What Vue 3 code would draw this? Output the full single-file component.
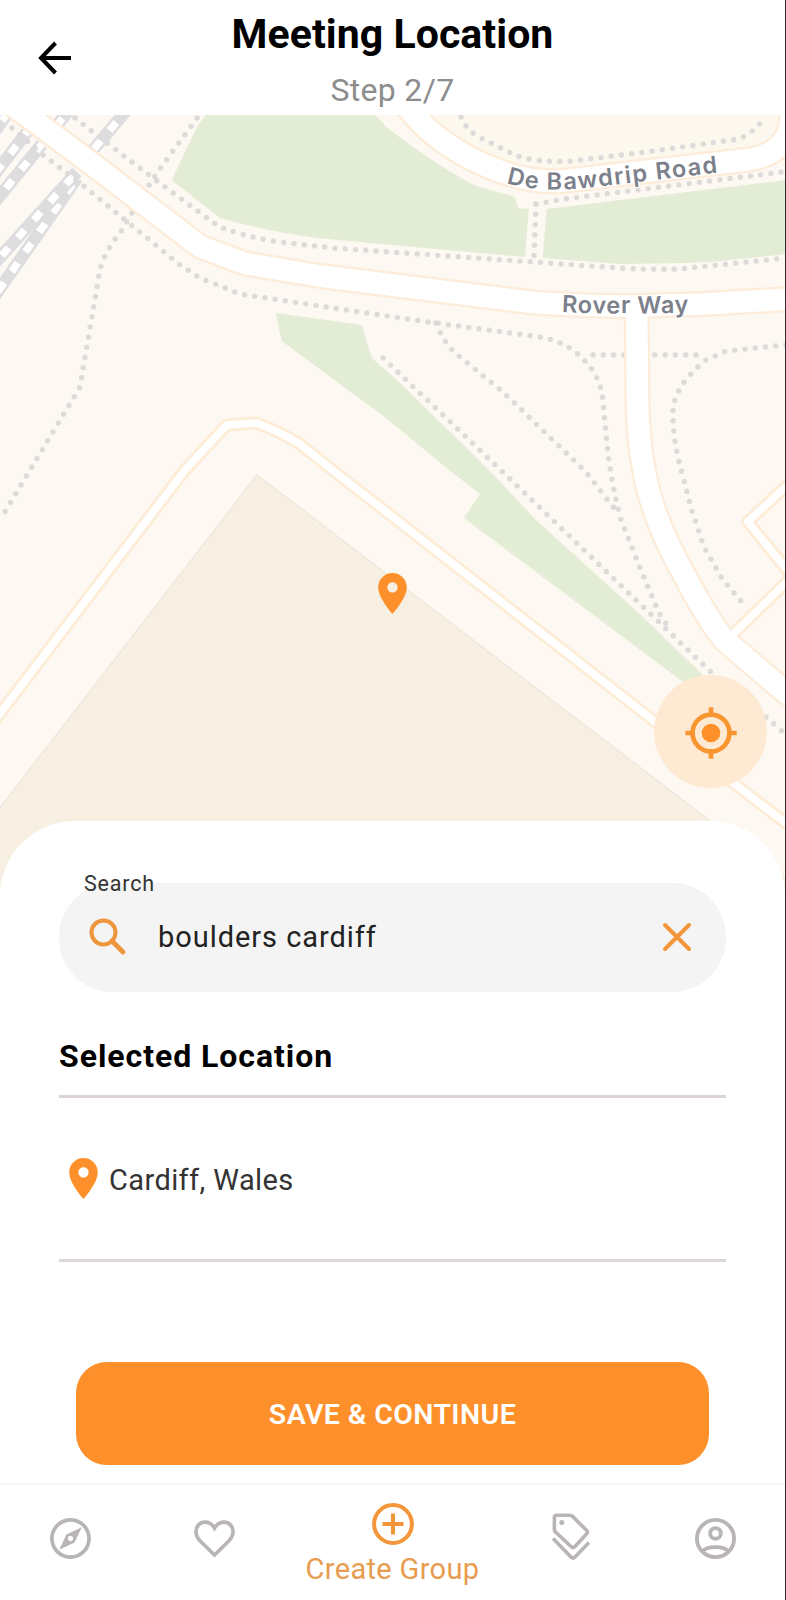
<script setup>
const pin = 'M12 2C8.13 2 5 5.13 5 9c0 5.25 7 13 7 13s7-7.75 7-13c0-3.87-3.13-7-7-7zm0 9.5c-1.38 0-2.5-1.12-2.5-2.5s1.12-2.5 2.5-2.5 2.5 1.12 2.5 2.5-1.12 2.5-2.5 2.5z'

const parks = [
  'M208 112L197 127 171.700 180 220 218 Q265 231 317 238L400 245.700 525 257 528.700 209 518 208 515 197 476 186 Q440 168 386 127L373 112Z',
  'M546.700 209L786 180V254Q720 262 686 263L619 264 542.700 258Z',
  'M275.700 313L361.700 325 371.700 357.700 400 383 489 470 536 520 642.700 616.700 702.700 675 682.700 681.700 464 518 480 494 449 470 386 418 281.700 341Z',
]

const rails = [
  { d: 'M27 132L-6 175', off: 7 },
  { d: 'M42 144L-6 203', off: 1.4 },
  { d: 'M77 178L-6 297', off: -7.6 },
  { d: 'M77 172L-6 264', off: -6 },
  { d: 'M126 111L93 150', off: -15 },
  { d: 'M70 109L58 124', off: -12 },
  { d: 'M8 112L-4 130', off: 0 },
]

const paths = [
  'M75 118L107 143 153 178 218 226Q245 237 280 242L333 248 400 252.700 533 262 619 268Q650 270 679 269L786 258',
  'M197 118L157 173 148 187',
  'M12 128L43 155 85 187 125 220 180 265 200 278 240 294 300 303 400 318 436 323 540 337Q568 342 584 360Q602 378 603 403L608 453Q612 486 621 520L643 575 659 613 669 628',
  'M132 213L122 230Q103 254 100 270L97 287 80 387 27 475 0 520',
  'M436 323Q443 341 454 352L503 392 586 472 617 512',
  'M383 358L443 415 509 478 711 672M766 717L783 732',
  'M593 355H699',
  'M786 345L726 351 706 360Q675 385 673 410 Q672 440 684 480L691 508 704 547 723 580 746 607',
  'M461 117Q466 130 479 137L515 155Q535 163 573 161L653 151 739 139Q756 131 764 118',
  'M536 204L564 199 783 172',
  'M536 204L534 257',
]

const minor = [
  'M-8 724L185 470 226.700 425 256.700 423 Q280 432 298 442.700L340 476 386 511.700 652.700 720 736 785 792 828',
  'M792 481L747.700 521.700 792 576',
  'M792 577L730 637',
]

const major = [
  'M-20 82L25 114 92 164 200 246.500 245 263.500 320 276 400 286 533 302.500Q590 306.500 636 306L703 304 800 298.500',
  'M400 98L414 115Q438 143 480 163Q520 182 558 181.500L640 172 750 159.500Q795 151 791 108',
  'M636.700 306L637.500 400Q638 440 644 470Q652 519 686 578Q705 615 722.700 638Q740 654 794 699',
]
</script>

<template>
  <main class="screen">
    <header class="header">
      <button class="back" aria-label="Back">
        <svg viewBox="0 0 34 34" width="34" height="34">
          <path d="M33 17H4M17.500 2L3 17 17.500 32" fill="none" stroke="#000" stroke-width="4" />
        </svg>
      </button>
      <h1>Meeting Location</h1>
      <p>Step 2/7</p>
    </header>

    <section class="map">
      <svg class="tiles" viewBox="0 115 786 785" width="786" height="785">
        <rect y="115" width="786" height="785" fill="#fdf8f1" />
        <path d="M425 112L480 152 555 172 750 150 785 115Z" fill="#fcf8ed" />
        <path d="M257 475L709 820 800 890V910H-4V813Z" fill="#f7efe2" stroke="#f1e7de" stroke-width="1.500" />
        <path v-for="d in parks" :key="d" :d="d" fill="#e3ecd5" />
        <g fill="none">
          <template v-for="r in rails" :key="r.d">
            <path :d="r.d" stroke="#dddddf" stroke-width="12.500" />
            <path :d="r.d" stroke="#fff" stroke-width="7.500" stroke-dasharray="10.500 13.500" :stroke-dashoffset="r.off" />
          </template>
        </g>
        <g fill="none" stroke="#dddbda" stroke-width="5.400" stroke-linecap="round" stroke-dasharray="0 10.300">
          <path v-for="d in paths" :key="d" :d="d" />
        </g>
        <g fill="none" stroke-linejoin="round">
          <path v-for="d in minor" :key="'c' + d" :d="d" stroke="#fdecd6" stroke-width="13" />
          <path v-for="d in major" :key="'c' + d" :d="d" stroke="#fdecd9" stroke-width="26" />
          <path v-for="d in minor" :key="'f' + d" :d="d" stroke="#fff" stroke-width="7.500" />
          <path v-for="d in major" :key="'f' + d" :d="d" stroke="#fff" stroke-width="21.500" />
        </g>
        <path id="bawdrip" d="M506.500 183Q540 193.500 596 187Q650 180.500 740 170" fill="none" />
        <path id="rover" d="M562 312Q620 315 700 312" fill="none" />
        <text class="road"><textPath href="#bawdrip" textLength="213">De Bawdrip Road</textPath></text>
        <text class="road"><textPath href="#rover" textLength="127">Rover Way</textPath></text>
      </svg>
      <svg class="marker" viewBox="0 0 24 24" width="49" height="49"><path :d="pin" /></svg>
      <button class="locate" aria-label="My location">
        <svg viewBox="0 0 24 24" width="56" height="56">
          <circle cx="12" cy="12" r="4" fill="#fe902b" />
          <circle cx="12" cy="12" r="7.900" fill="none" stroke="#f8952f" stroke-width="2" />
          <path d="M12 1V4M12 20V23M1 12H4M20 12H23" stroke="#f8952f" stroke-width="2" />
        </svg>
      </button>
    </section>

    <section class="sheet">
      <div class="search">
        <label>Search</label>
        <svg class="lens" viewBox="0 0 38 38" width="38" height="38">
          <circle cx="14.500" cy="14.500" r="12" fill="none" stroke="#ee963d" stroke-width="4" />
          <path d="M23 23L34 34" stroke="#ee963d" stroke-width="4.800" stroke-linecap="round" />
        </svg>
        <span class="query">boulders cardiff</span>
        <svg class="clear" viewBox="0 0 30 30" width="30" height="30">
          <path d="M3 3L27 27M27 3L3 27" stroke="#f3963a" stroke-width="4" stroke-linecap="round" />
        </svg>
      </div>
      <h2>Selected Location</h2>
      <div class="place">
        <svg viewBox="0 0 24 24" width="49" height="49"><path :d="pin" /></svg>
        <span>Cardiff, Wales</span>
      </div>
      <button class="save">SAVE &amp; CONTINUE</button>
    </section>

    <nav class="nav">
      <a>
        <svg viewBox="0 0 24 24" width="49" height="49">
          <path fill="#b9b4b6" d="M12 2C6.480 2 2 6.480 2 12s4.480 10 10 10 10-4.480 10-10S17.520 2 12 2zm0 18.200c-4.520 0-8.200-3.680-8.200-8.200s3.680-8.200 8.200-8.200 8.200 3.680 8.200 8.200-3.680 8.200-8.200 8.200zm-5.500-2.700l7.510-3.490L17.500 6.500 9.990 9.990 6.500 17.500zm5.500-6.800c.72 0 1.300.58 1.300 1.300s-.58 1.300-1.300 1.300-1.300-.58-1.300-1.300.58-1.300 1.300-1.300z" />
        </svg>
      </a>
      <a>
        <svg viewBox="0 0 24 24" width="49" height="49">
          <path d="M12 20.100L5 13.200C3.600 11.800 2.900 10.300 2.900 8.500C2.900 6 4.900 4 7.300 4C9.300 4 10.900 5 12 6.900C13.100 5 14.700 4 16.700 4C19.100 4 21.100 6 21.100 8.500C21.100 10.300 20.400 11.800 19 13.200Z" fill="none" stroke="#b9b4b6" stroke-width="1.800" />
        </svg>
      </a>
      <a class="active">
        <svg viewBox="0 0 42 42" width="42" height="42">
          <circle cx="21" cy="21" r="18.900" fill="none" stroke="#f3963a" stroke-width="4" />
          <path d="M21 10.500V31.500M10.500 21H31.500" stroke="#f3963a" stroke-width="4" />
        </svg>
        <span>Create Group</span>
      </a>
      <a class="tags">
        <svg viewBox="0 0 38 50" width="38" height="50">
          <g fill="none" stroke="#b9b4b6" stroke-width="3.600" stroke-linejoin="round">
            <path d="M4.300 3.300H18Q19.500 3.300 20.500 4.300L34.500 18.300Q36.300 20.200 34.500 22L23 34.500Q21 36.500 19 34.500L3.500 20Q2.400 19 2.400 17.500V5.200Q2.400 3.300 4.300 3.300Z" />
            <path d="M1 26.500L19 45Q21 47 23 45L37 30.500" />
          </g>
          <circle cx="9.800" cy="10.500" r="2.500" fill="#b9b4b6" />
        </svg>
      </a>
      <a>
        <svg viewBox="0 0 24 24" width="49" height="49">
          <g fill="none" stroke="#b9b4b6" stroke-width="1.900">
            <circle cx="12" cy="12" r="9.100" />
            <circle cx="12" cy="9.500" r="2.600" />
            <path d="M5.700 18.400C7.500 15.500 16.500 15.500 18.300 18.400" />
          </g>
        </svg>
      </a>
    </nav>
  </main>
</template>

<style>
body { margin: 0; background: #fff; }
</style>

<style scoped>
* { box-sizing: border-box; }
button { border: 0; padding: 0; background: none; font: inherit; }
svg { display: block; flex: none; }
.screen {
  width: 786px; height: 1600px; overflow: hidden; position: relative;
  display: flex; flex-direction: column; background: #fff;
  font-family: Roboto, "Liberation Sans", sans-serif;
}
.screen::after { content: ""; position: absolute; top: 0; right: 0; width: 1px; height: 100%; background: #2d2d2d; }
.header { position: relative; flex: none; height: 115px; width: 785px; text-align: center; }
.back { position: absolute; left: 38px; top: 41px; }
h1 { margin: 0; font-size: 41px; line-height: 69px; font-weight: 700; color: #000; letter-spacing: 0.05px; }
.header p { margin: 0; font-size: 32px; line-height: 42px; color: #8d8d8d; letter-spacing: 0.3px; }
.map { position: relative; flex: none; height: 706px; }
.road { font: 600 23.5px Inter, "Open Sans", sans-serif; fill: #7c808b; stroke: #fff; stroke-width: 2px; paint-order: stroke; }
.marker { position: absolute; left: 368px; top: 454px; fill: #fe902b; }
.locate {
  position: absolute; left: 654px; top: 560px; width: 113px; height: 113px; border-radius: 50%;
  background: #feead3; display: flex; align-items: center; justify-content: center; padding-top: 2px;
}
.sheet {
  position: relative; flex: none; width: 785px; height: 662px; padding: 62px 59px 0 59px;
  background: #fff; border-radius: 75px 75px 0 0; display: flex; flex-direction: column;
}
.search {
  position: relative; height: 109px; border-radius: 54px; background: #f4f4f4;
  display: flex; align-items: center; padding: 0 34px 2px 30px;
}
.search label { position: absolute; left: 25px; top: -13px; font-size: 21.5px; line-height: 28px; letter-spacing: 0.8px; color: #333; }
.query { flex: 1; margin-left: 31px; font-size: 29px; line-height: 36px; letter-spacing: 0.95px; color: #222; }
h2 {
  margin: 44px 0 0; padding-bottom: 19px; font-size: 32px; line-height: 40px; font-weight: 700;
  color: #000; border-bottom: 3px solid #dcd3dc; letter-spacing: 0.95px;
}
.place { height: 164px; display: flex; align-items: center; border-bottom: 3px solid #dcd5db; font-size: 29px; letter-spacing: 0.4px; color: #333; }
.place svg { fill: #fe902b; }
.place span { padding: 2px 0 0 1px; }
.save {
  margin: 100px 17px 0; height: 103px; border-radius: 31px; background: #fe902b; color: #fff;
  font-size: 28.5px; font-weight: 600; letter-spacing: 0.4px; flex: none; padding-top: 2px;
}
.nav {
  flex: 1; width: 785px; border-top: 2px solid #f7f7f7; overflow: hidden;
  display: grid; grid-template-columns: 144px 144px 213px 144px 144px; justify-content: center;
}
.nav a { display: flex; flex-direction: column; align-items: center; padding-top: 29px; }
.nav .tags { padding-top: 27px; }
.nav .active { padding-top: 18px; font-size: 29px; line-height: 34px; letter-spacing: 0.35px; color: #e79c50; }
.active span { margin-top: 7px; white-space: nowrap; }
</style>
